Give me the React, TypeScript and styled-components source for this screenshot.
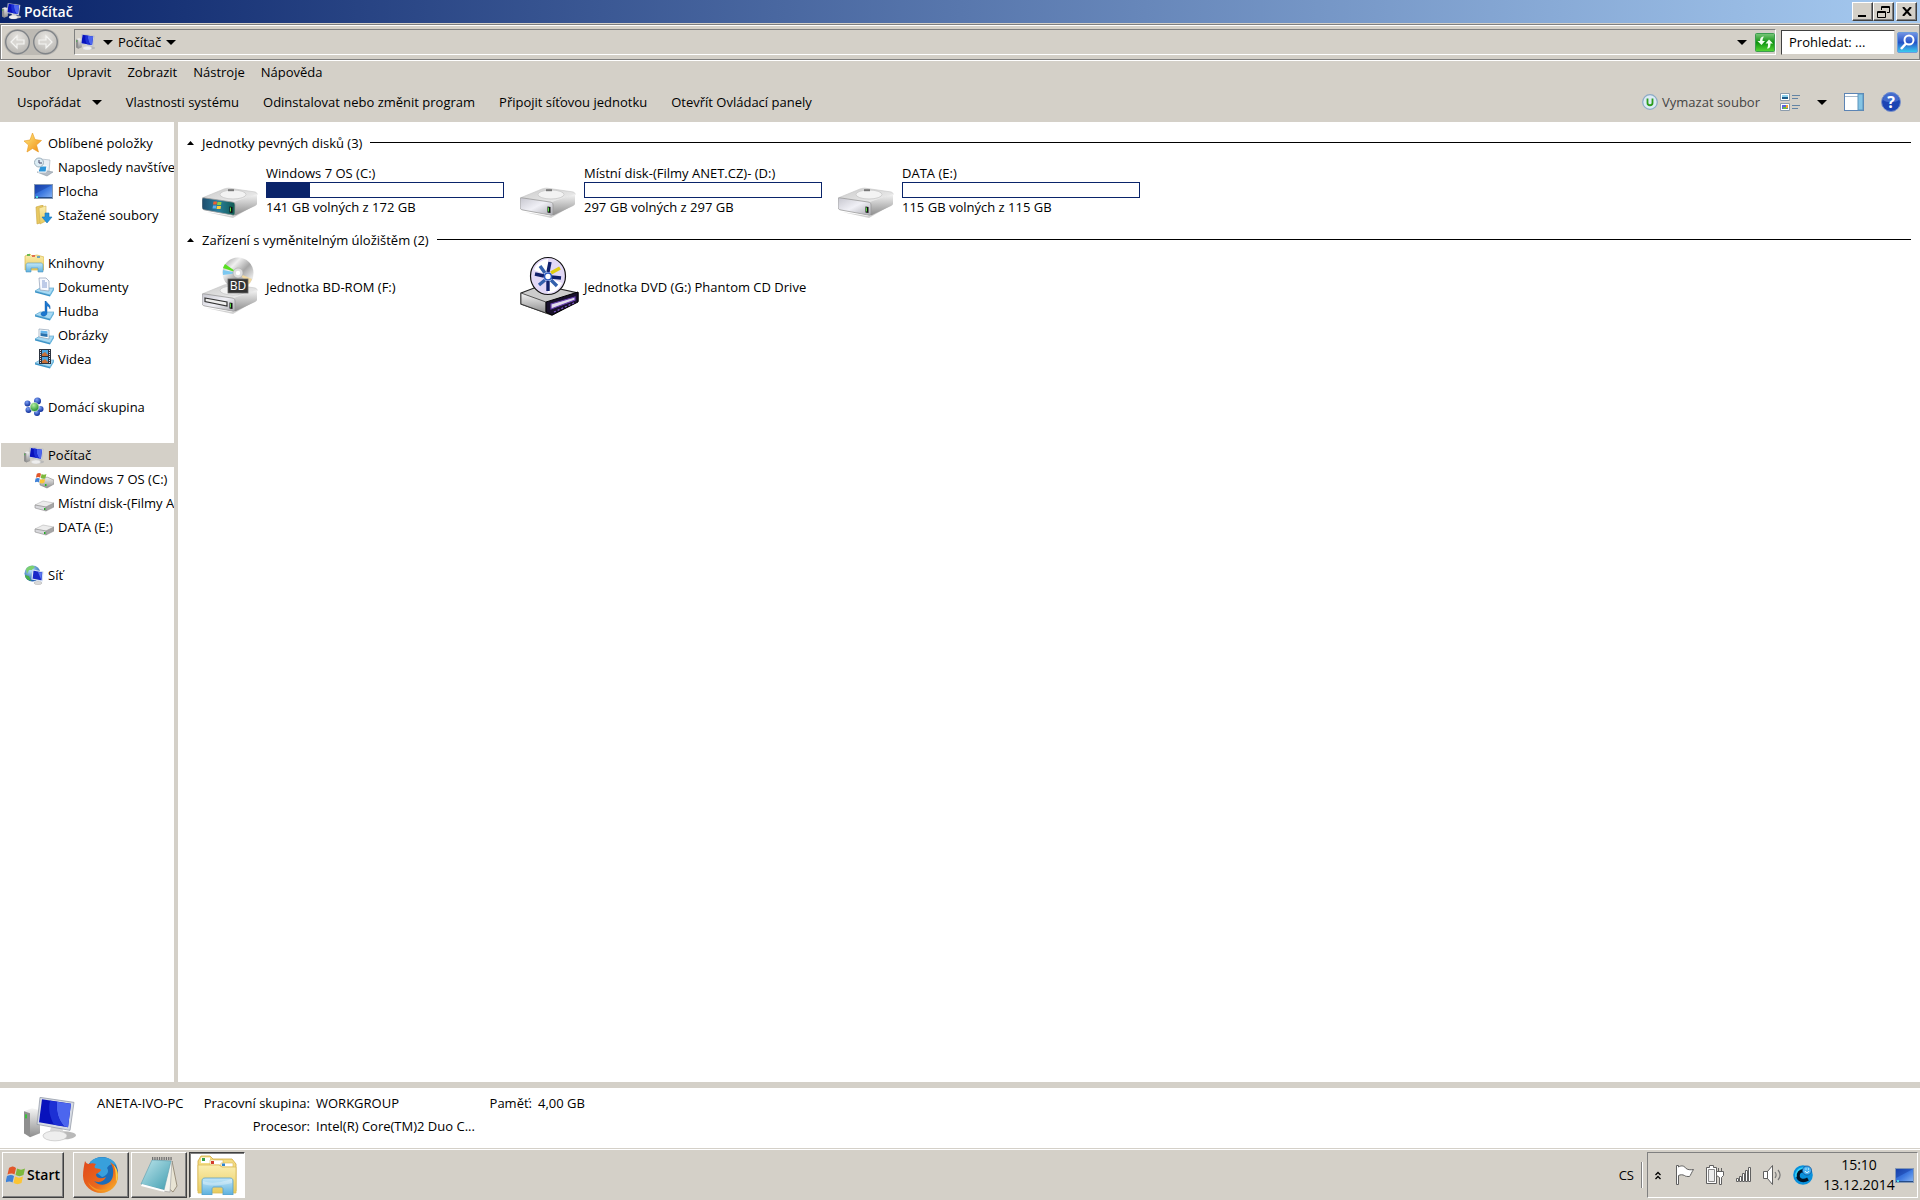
import React from 'react';
import styled, { createGlobalStyle, css } from 'styled-components';

const face = '#d4d0c8';
const navy = '#0a246a';

const GlobalStyle = createGlobalStyle`
  * { box-sizing: border-box; }
  body {
    margin: 0;
    background: ${face};
    color: #000;
    font: 13px/16px Tahoma, "Open Sans", "Noto Sans", sans-serif;
  }
  button, input { font: inherit; color: inherit; }
  button { border: 0; padding: 0; background: none; }
  h1, h2, ul, p, dl, dd { margin: 0; padding: 0; font: inherit; list-style: none; }
  a { color: inherit; text-decoration: none; }
  svg { display: block; flex: none; }
`;

const Desktop = styled.div`
  display: flex;
  flex-direction: column;
  height: 100vh;
  overflow: hidden;
  white-space: nowrap;
`;

const TitleBar = styled.header`
  display: flex;
  align-items: center;
  gap: 3px;
  height: 23px;
  padding: 0 3px 0 2px;
  background: linear-gradient(to right, ${navy}, #a6caf0);
  color: #fff;
`;

const Title = styled.h1`
  flex: 1;
  font-size: 14px;
  font-weight: 600;
`;

const WindowButtons = styled.div`
  display: flex;
`;

const CaptionButton = styled.button<{ $apart?: boolean }>`
  display: flex;
  align-items: center;
  justify-content: center;
  width: 21px;
  height: 19px;
  margin-left: ${p => (p.$apart ? 2 : 0)}px;
  background: ${face};
  border: 1px solid;
  border-color: #fff #404040 #404040 #fff;
  box-shadow: inset -1px -1px #808080;
`;

const AddressRow = styled.div`
  display: flex;
  align-items: center;
  gap: 5px;
  height: 36px;
  margin-top: 1px;
  padding: 0 1px 0 3px;
  border: 1px solid #808080;
  box-shadow: inset 1px 1px #fff, 0 1px #fff;
`;

const NavButtons = styled.div`
  display: flex;
  gap: 3px;
  padding: 0 1px;
  margin-right: 10px;
  border-radius: 14px;
  background: #bdbab4;
`;

const NavButton = styled.button`
  width: 25px;
  height: 26px;
`;

const AddressBox = styled.nav`
  display: flex;
  flex: 1;
  align-items: center;
  gap: 8px;
  height: 26px;
  padding: 0 0 0 1px;
  border: 1px solid;
  border-color: #808080 #fff #fff #808080;
`;

const Crumb = styled.button`
  display: flex;
  align-items: center;
  gap: 5px;
  margin-right: auto;
`;

const IconButton = styled.button<{ $width?: number }>`
  display: flex;
  align-items: center;
  width: ${p => (p.$width ? `${p.$width}px` : 'auto')};
`;

const SearchBox = styled.form`
  display: flex;
  align-items: center;
  gap: 2px;
`;

const SearchInput = styled.input`
  width: 114px;
  height: 25px;
  padding: 0 7px;
  background: #fff;
  border: 1px solid;
  border-color: #404040 #d4d0c8 #d4d0c8 #404040;
  border-radius: 0;
  outline: 0;
  &::placeholder { color: #000; opacity: 1; }
`;

const MenuBar = styled.nav`
  display: flex;
  align-items: center;
  gap: 16px;
  height: 24px;
  padding-left: 7px;
`;

const CommandBar = styled.div`
  display: flex;
  align-items: center;
  gap: 24px;
  height: 38px;
  padding: 0 19px 2px 17px;
`;

const Command = styled.button<{ $gap?: number; $muted?: boolean; $push?: boolean }>`
  display: flex;
  align-items: center;
  gap: ${p => p.$gap ?? 4}px;
  margin-left: ${p => (p.$push ? 'auto' : 0)};
  ${p => p.$muted && css`color: #444;`}
`;

const CommandTools = styled.div`
  display: flex;
  align-items: center;
  gap: 17px;
  margin-left: -4px;
`;

const Body = styled.div`
  display: flex;
  flex: 1;
  min-height: 0;
`;

const Sidebar = styled.nav`
  display: flex;
  flex-direction: column;
  gap: 24px;
  width: 174px;
  padding: 9px 0 0 1px;
  background: #fff;
  overflow: hidden;
`;

const TreeItem = styled.a<{ $level: number; $selected?: boolean }>`
  display: flex;
  align-items: center;
  gap: 4px;
  height: 24px;
  padding-left: ${p => (p.$level ? 33 : 23)}px;
  background: ${p => (p.$selected ? face : 'transparent')};
`;

const Content = styled.main`
  flex: 1;
  min-width: 0;
  margin-left: 4px;
  padding: 10px 9px 0 9px;
  background: #fff;
`;

const GroupHeader = styled.h2`
  display: flex;
  align-items: center;
  gap: 8px;
  height: 21px;
  &::after {
    content: '';
    flex: 1;
    height: 1px;
    background: #000;
  }
`;

const Tiles = styled.ul`
  display: grid;
  grid-template-columns: repeat(auto-fill, 302px);
  column-gap: 16px;
  height: 76px;
  padding: 5px 0 0 15px;
`;

const Tile = styled.li`
  display: flex;
  align-items: center;
  gap: 8px;
  height: 64px;
`;

const TileText = styled.div`
  display: flex;
  flex: 1;
  flex-direction: column;
  gap: 1px;
`;

const UsageBar = styled.div`
  height: 16px;
  border: 1px solid ${navy};
`;

const UsageFill = styled.div`
  height: 100%;
  background: ${navy};
`;

const Details = styled.section`
  display: flex;
  height: 60px;
  margin-top: 6px;
  padding: 7px 24px 0 24px;
  background: #fff;
`;

const DetailsIcon = styled.div`
  width: 73px;
  padding-top: 2px;
`;

const DetailGrid = styled.dl`
  display: grid;
  grid-template-columns: 108px 164px 46px auto;
  grid-auto-rows: 23px;
  column-gap: 6px;
`;

const ComputerName = styled.p`
  width: 105px;
`;

const DetailLabel = styled.dt`
  text-align: right;
`;

const DetailValue = styled.dd`
  min-width: 0;
`;

const Taskbar = styled.footer`
  display: flex;
  align-items: center;
  height: 52px;
  padding: 2px 2px 1px 2px;
  border-top: 1px solid ${face};
  box-shadow: inset 0 1px #fff;
`;

const TaskButton = styled.button<{ $active?: boolean; $start?: boolean }>`
  display: flex;
  align-items: center;
  justify-content: center;
  gap: 1px;
  width: ${p => (p.$start ? 62 : 56)}px;
  height: 46px;
  margin-right: ${p => (p.$start ? 9 : 2)}px;
  border: 1px solid;
  border-color: #fff #404040 #404040 #fff;
  box-shadow: inset -1px -1px #808080;
  ${p => p.$start && css`font-size: 14px; font-weight: 600;`}
  ${p => p.$active && css`
    background: #fff;
    border-color: #404040 #fff #fff #404040;
    box-shadow: inset 1px 1px #808080;
  `}
`;

const Language = styled.button`
  height: 26px;
  margin-left: auto;
  padding-right: 7px;
  border-right: 1px solid #808080;
  box-shadow: 1px 0 #fff;
`;

const Tray = styled.div`
  display: flex;
  align-items: center;
  gap: 10px;
  height: 46px;
  margin-left: 5px;
  padding: 0 2px 0 7px;
  border: 1px solid;
  border-color: #808080 #fff #fff #808080;
`;

const Clock = styled.time`
  width: 72px;
  margin-right: -10px;
  font-size: 14px;
  line-height: 20px;
  text-align: center;
`;

/* ---------- icons ---------- */

const SharedDefs = () => (
  <svg width="0" height="0" style={{ position: 'absolute' }} aria-hidden="true">
    <defs>
      <linearGradient id="screen" x1="0" y1="0" x2="1" y2="1">
        <stop offset="0" stopColor="#0a1cc8" /><stop offset=".45" stopColor="#0613b4" />
        <stop offset=".5" stopColor="#4a66f0" /><stop offset="1" stopColor="#1a36dc" />
      </linearGradient>
      <linearGradient id="metal" x1="0" y1="0" x2="0" y2="1">
        <stop offset="0" stopColor="#f4f4f4" /><stop offset="1" stopColor="#8e8e8e" />
      </linearGradient>
      <linearGradient id="top" x1="0" y1="0" x2="1" y2="1">
        <stop offset="0" stopColor="#cacaca" /><stop offset="1" stopColor="#f2f2f2" />
      </linearGradient>
      <linearGradient id="front" x1="0" y1="0" x2="1" y2="1">
        <stop offset="0" stopColor="#c6c6ce" /><stop offset=".5" stopColor="#f0f0f6" /><stop offset="1" stopColor="#aaaab0" />
      </linearGradient>
      <linearGradient id="osfront" x1="0" y1="0" x2="1" y2="0">
        <stop offset="0" stopColor="#1d4c6c" /><stop offset=".5" stopColor="#2a7d9c" /><stop offset="1" stopColor="#0e5a50" />
      </linearGradient>
      <linearGradient id="desk" x1="0" y1="0" x2="1" y2="1">
        <stop offset="0" stopColor="#1c48b4" /><stop offset=".5" stopColor="#3c78e0" /><stop offset="1" stopColor="#8cb8f4" />
      </linearGradient>
      <linearGradient id="folder" x1="0" y1="0" x2="0" y2="1">
        <stop offset="0" stopColor="#fbeeb0" /><stop offset="1" stopColor="#e8cb5e" />
      </linearGradient>
      <linearGradient id="glass" x1="0" y1="0" x2="0" y2="1">
        <stop offset="0" stopColor="#c4e8f8" /><stop offset="1" stopColor="#5cb0de" />
      </linearGradient>
      <linearGradient id="star" x1="0" y1="0" x2="1" y2="1">
        <stop offset="0" stopColor="#ffec80" /><stop offset="1" stopColor="#f08a10" />
      </linearGradient>
      <radialGradient id="nav" cx=".5" cy=".3" r=".7">
        <stop offset="0" stopColor="#e6e4e0" /><stop offset="1" stopColor="#b8b6b2" />
      </radialGradient>
      <radialGradient id="globe" cx=".4" cy=".3" r=".7">
        <stop offset="0" stopColor="#b8e4fa" /><stop offset="1" stopColor="#1e5cac" />
      </radialGradient>
      <radialGradient id="green" cx=".4" cy=".3" r=".7">
        <stop offset="0" stopColor="#b4f0a0" /><stop offset="1" stopColor="#1c8c28" />
      </radialGradient>
      <radialGradient id="blue" cx=".4" cy=".3" r=".7">
        <stop offset="0" stopColor="#7ca0f4" /><stop offset="1" stopColor="#0c2c98" />
      </radialGradient>
      <linearGradient id="refresh" x1="0" y1="0" x2="0" y2="1">
        <stop offset="0" stopColor="#7cc87c" /><stop offset=".5" stopColor="#0e920e" /><stop offset="1" stopColor="#58d838" />
      </linearGradient>
      <linearGradient id="search" x1="0" y1="0" x2="0" y2="1">
        <stop offset="0" stopColor="#7494e4" /><stop offset=".5" stopColor="#2454c8" /><stop offset="1" stopColor="#3cd0f0" />
      </linearGradient>
      <linearGradient id="disc" x1="0" y1="0" x2="1" y2="1">
        <stop offset="0" stopColor="#8a8a8a" /><stop offset=".3" stopColor="#f0f0f0" /><stop offset=".55" stopColor="#a6a6a6" />
        <stop offset=".8" stopColor="#e8e8e8" /><stop offset="1" stopColor="#8c8c8c" />
      </linearGradient>
      <linearGradient id="fox" x1="0" y1="0" x2="1" y2="1">
        <stop offset="0" stopColor="#e0481c" /><stop offset=".6" stopColor="#ea6a1c" /><stop offset="1" stopColor="#fcc430" />
      </linearGradient>
      <linearGradient id="pad" x1="0" y1="0" x2="1" y2="1">
        <stop offset="0" stopColor="#bfe6ec" /><stop offset="1" stopColor="#3f9db0" />
      </linearGradient>
    </defs>
  </svg>
);

const Arrow = ({ up = false }: { up?: boolean }) => (
  <svg width={up ? 7 : 10} height={up ? 4 : 5} viewBox="0 0 10 5" preserveAspectRatio="none">
    <path d={up ? 'M0 5 5 0l5 5z' : 'M0 0h10L5 5z'} fill="#000" />
  </svg>
);

const Computer = ({ size = 19 }: { size?: number }) => (
  <svg width={size} height={size * 0.86} viewBox="0 0 52 44">
    <path d="M0 14 8 11 16 13V36L6 40 0 36z" fill="url(#metal)" />
    <path d="M0 14 6 16V39L0 36z" fill="#8f8f8f" />
    <rect x="1" y="17" width="2" height="4" fill="#39c23a" />
    <ellipse cx="39" cy="38" rx="13" ry="4" fill="#b9b9b9" />
    <path d="M27 30h11l2 7c-4 3-12 3-15 0z" fill="#d9d9d9" />
    <ellipse cx="31" cy="38.500" rx="12" ry="5" fill="#eee" stroke="#bbb" strokeWidth=".6" />
    <path d="M16 0 50 5 46 33 13 27z" fill="#d6dbe4" stroke="#8d93a0" strokeWidth=".7" />
    <path d="M18 2 47 6.500 44 30 15 25z" fill="#0812bc" />
    <path d="M33 4.500 47 6.500 44 30 40 29C34 22 32 14 33 4.500z" fill="#4c66ee" />
    <path d="M26 3.500 33 4.500C32 14 34 22 40 29L30 27.500C26 20 24 12 26 3.500z" fill="#1c30d4" />
  </svg>
);

const WinFlag = ({ size = 20 }: { size?: number }) => (
  <svg width={size} height={size} viewBox="0 0 20 20">
    <path d="M3 3c3-2 5-2 7 0L8.500 9.500c-2-1.500-4-1.500-7 0z" fill="#e2572b" />
    <path d="M11 3.500c3 1.500 5 1.500 8 0L17.500 10c-3 1.500-5 1.500-8 0z" fill="#7cb83c" />
    <path d="M1 11c3-1.500 5-1.500 7 0l-1.500 6.500c-2-1.500-4-1.500-7 0z" fill="#3f82d8" />
    <path d="M9 11.500c3 1.500 5 1.500 8 0L15.500 18c-3 1.500-5 1.500-8 0z" fill="#fbc434" />
  </svg>
);

const DriveBody = ({ os = false, slot = false }: { os?: boolean; slot?: boolean }) => (
  <>
    <path d="M4 24 31 30 55 16V14L30 28z" fill="#000" opacity=".18" />
    <path d="M0 10 22 1c2-.7 4-1 6-.7l24 3.500c3 .5 3 1.500 3 3L32 15z" fill="url(#top)" stroke="#c4c4c4" strokeWidth=".6" />
    <ellipse cx="31" cy="6.500" rx="13" ry="4.500" fill="#f3f3f3" stroke="#c8c8c8" strokeWidth=".8" />
    <path d="M26 1.200h6v2h-6z" fill="#777" />
    <path d="M32 14 55 6v9c0 2-1 2.500-2 3L34 27c-1 .5-2 .5-2-1z" fill="url(#metal)" />
    <path d="M0 12c0-2 1-2.500 3-2l27 4c2 .3 3 1 3 3v8c0 2-1 2.500-3 2L3 22c-2-.4-3-1-3-3z" fill={os ? 'url(#osfront)' : 'url(#front)'} stroke="#9b9b9b" strokeWidth=".8" />
    {slot && <path d="M3 14 25 18v4L3 17.500z" fill="#eee" stroke="#333" strokeWidth="1.200" />}
    <path d="M27.500 18.500l3 .5v6l-3-.5z" fill="#111" />
    <path d="M28 19.500h1v4h-1z" fill="#54e040" />
  </>
);

const Drive = ({ os }: { os?: boolean }) => (
  <svg width="56" height="64" viewBox="0 0 56 64">
    <g transform="translate(0 30)">
      <DriveBody os={os} />
      {os && <svg x="10" y="12" width="10" height="10" viewBox="0 0 20 20">
        <path d="M3 3h7L9 9H2z" fill="#f06030" /><path d="M11 4h8l-1 6h-8z" fill="#8ccc44" />
        <path d="M2 11h7l-1 6H1z" fill="#5ab0f0" /><path d="M10 12h8l-1 6H9z" fill="#ffd040" />
      </svg>}
    </g>
  </svg>
);

const BdLabel = styled.text`
  font: 12px "Open Sans", sans-serif;
  fill: #fff;
  text-anchor: middle;
`;

const BdDrive = () => (
  <svg width="56" height="64" viewBox="0 0 56 64">
    <g transform="translate(0 29)"><DriveBody slot /></g>
    <circle cx="36" cy="18" r="15.500" fill="url(#disc)" />
    <path d="M36 18 21 13a15.500 15.500 0 0 1 2-4z" fill="#58e020" />
    <path d="M36 18 21 20a15.500 15.500 0 0 1 0-5z" fill="#7cc8f0" />
    <path d="M36 18 50 24a15.500 15.500 0 0 1-3 5z" fill="#f0d8a0" />
    <circle cx="36" cy="18" r="5" fill="#ddd" stroke="#aaa" strokeWidth=".6" />
    <circle cx="36" cy="18" r="2.200" fill="#fff" />
    <rect x="26" y="24" width="20" height="14" fill="#333" stroke="#666" strokeWidth=".8" />
    <BdLabel x="36" y="35">BD</BdLabel>
  </svg>
);

const DvdDrive = () => (
  <svg width="56" height="64" viewBox="0 0 56 64" overflow="visible">
    <path d="M1 38 22 30 58 38V46L32 60 1 49z" fill="#ccc" stroke="#222" strokeWidth="1.200" />
    <path d="M1 38 26 47V58L1 49z" fill="url(#metal)" stroke="#333" strokeWidth=".8" />
    <path d="M26 47 58 37V47L32 60 26 57z" fill="#18102c" stroke="#000" />
    <path d="M31 49 55 42V45L31 54z" fill="#e0dcea" stroke="#6840b0" strokeWidth="1.200" />
    <path d="M34 57 56 47" stroke="#8058c8" strokeWidth="1.200" strokeDasharray="2 2" />
    <ellipse cx="28" cy="21" rx="17.500" ry="18.500" fill="#e2d8f6" stroke="#111" strokeWidth="1.200" />
    <path d="M14 15A16 16 0 0 1 28 4V20zM42 28A16 16 0 0 1 28 38V22z" fill="#fff" />
    <g strokeWidth="3.400" fill="none">
      <path d="M28 17 30 7M31 22 41 23M28 26V36M24 21 15 19" stroke="#10206c" />
      <path d="M25 18 20 11M31 25 37 31M25 25 19 30" stroke="#3460ac" />
      <path d="M31 18 40 13" stroke="#e0cc10" />
    </g>
    <circle cx="28" cy="21.500" r="3.500" fill="#fff" stroke="#2858c0" strokeWidth="1.600" />
  </svg>
);

const Tray3d = () => (
  <>
    <path d="M1 14 6 11H20L16 18z" fill="#a8daf4" stroke="#4c9cc8" strokeWidth=".6" />
    <path d="M1 14 16 18V19.500L1 15.500z" fill="#3c94c8" />
    <path d="M16 18 20 11V13L16 19.500z" fill="#5cb0dc" />
  </>
);

type IconName = 'star' | 'recent' | 'desktop' | 'downloads' | 'libraries' | 'documents' | 'music'
  | 'pictures' | 'videos' | 'homegroup' | 'computer' | 'osdisk' | 'disk' | 'network';

const glyphs: Record<IconName, React.ReactNode> = {
  star: <path d="M8.500 0 11 6.500 17.500 7.500 12.500 12 14.500 19 8.500 15.500 3 19 4.500 12 0 8 6 7z" fill="url(#star)" stroke="#e89820" strokeWidth=".6" />,
  recent: (
    <>
      <path d="M7 2 16 3 15 15 7 14z" fill="#e8eef4" stroke="#a0acb8" strokeWidth=".6" />
      <path d="M3 15 8 13 19 15 13 19z" fill="#b4bcc6" stroke="#8c98a4" strokeWidth=".6" />
      <path d="M6 9 13 9 12 15 4 15z" fill="#2c94d8" stroke="#fff" />
      <circle cx="5" cy="5.500" r="4.500" fill="#dcecf4" stroke="#9cb0bc" />
      <path d="M5 3V6H8" stroke="#446" fill="none" />
    </>
  ),
  desktop: (
    <>
      <rect x=".5" y="3.500" width="18" height="14" fill="url(#desk)" stroke="#8498b4" />
      <path d="M1 4H18L1 13z" fill="#0c3098" opacity=".4" />
      <path d="M1 16.500H18" stroke="#244c88" /><rect x="2" y="15" width="2" height="2" fill="#4cd8e8" />
    </>
  ),
  downloads: (
    <>
      <path d="M2 2 9 0V17L3 19z" fill="#e8c860" stroke="#c8a440" strokeWidth=".6" />
      <path d="M5 3 12 1V16L6 19z" fill="url(#folder)" stroke="#d0b050" strokeWidth=".6" />
      <path d="M11 8H15V12H18L13 18 8 12H11z" fill="#2492dc" stroke="#1674b8" strokeWidth=".6" />
    </>
  ),
  libraries: (
    <>
      <path d="M1 3 6 1 8 3 13 2 20 4V17H1z" fill="url(#folder)" stroke="#d8b84c" strokeWidth=".7" />
      <path d="M3 2h3" stroke="#3a3" strokeWidth="1.400" /><path d="M8 3h3" stroke="#d43" strokeWidth="1.400" /><path d="M13 4h3" stroke="#38c" strokeWidth="1.400" />
      <path d="M2 12c0-1 1-2 2-2H17c1 0 2 1 2 2V19H14V15H7V19H2z" fill="url(#glass)" stroke="#5098c4" strokeWidth=".6" />
    </>
  ),
  documents: <><Tray3d /><path d="M5 1H12L15 4V14L6 13z" fill="#f8faff" stroke="#8c9cb4" strokeWidth=".7" /><path d="M8 4H11M8 6H13M8 8H13M8 10H13" stroke="#6484c4" strokeWidth=".8" /></>,
  music: <><Tray3d /><path d="M12 0c1 3 5 3 4 8-.5-2-2-3-3-3V12c0 4-6 4-6 1 0-2 3-3 4-2V0z" fill="#1c78d0" stroke="#0c54a4" strokeWidth=".4" /></>,
  pictures: <><Tray3d /><path d="M5 4 15 5V14L5 12z" fill="#fff" stroke="#8ca0b4" strokeWidth=".7" /><path d="M6.500 5.500 13.500 6.200V9L6.500 8z" fill="#64b4ec" /><path d="M6.500 8 13.500 9V12L6.500 11z" fill="#2870ac" /></>,
  videos: <><Tray3d /><rect x="5" y="0" width="12" height="15" fill="#2c3440" /><path d="M8 1H14V7H8zM8 8H14V14H8z" fill="#4ca4e0" /><path d="M8 5l3-2 3 3v1H8zM8 12l3-2 3 3v1H8z" fill="#c87038" /><path d="M6.500 1V15M15.500 1V15" stroke="#dde" strokeDasharray="1 1" /></>,
  homegroup: (
    <>
      <circle cx="3.500" cy="6.500" r="3" fill="url(#blue)" /><circle cx="4.500" cy="13" r="3" fill="url(#blue)" />
      <circle cx="13.500" cy="4" r="3.500" fill="url(#blue)" /><circle cx="16.500" cy="12" r="3" fill="url(#blue)" />
      <circle cx="13" cy="16" r="3" fill="url(#blue)" /><circle cx="10.500" cy="10" r="4.500" fill="url(#green)" stroke="#fff" strokeWidth=".6" />
    </>
  ),
  computer: <svg y="2" width="20" height="17" viewBox="0 0 52 44"><Computer size={52} /></svg>,
  osdisk: <><path d="M6 12 13 8 20 11V15L13 19 6 16z" fill="url(#metal)" stroke="#888" strokeWidth=".6" /><rect x="11" y="15" width="1.500" height="2" fill="#2b2" /><svg x="1" y="3" width="12" height="12" viewBox="0 0 20 20"><WinFlag /></svg></>,
  disk: <><path d="M1 12 9 8 20 10 12 14z" fill="#ececec" stroke="#aaa" strokeWidth=".5" /><path d="M1 12 12 14V18L1 15z" fill="#d8d8dc" stroke="#888" strokeWidth=".6" /><path d="M12 14 20 10V14L12 18z" fill="#a6a6a6" stroke="#888" strokeWidth=".5" /><rect x="10" y="15" width="1.500" height="2" fill="#2a2" /></>,
  network: (
    <>
      <circle cx="8.500" cy="8.500" r="8" fill="url(#globe)" />
      <path d="M2 4c3-4 7-4 9-2L8 5H5L3 9z" fill="#7cd070" /><path d="M1 10 5 11 7 16C3 15 1 13 1 10z" fill="#48b048" />
      <path d="M9 5 19 7 18 16 8 14z" fill="#1828c8" stroke="#d8e4f4" strokeWidth="1.200" />
      <path d="M14 7 18 7.600 17.300 15z" fill="#5c78f0" />
      <ellipse cx="14" cy="18" rx="4" ry="1.500" fill="#ddd" stroke="#999" strokeWidth=".4" />
    </>
  ),
};

const SmallIcon = ({ name }: { name: IconName }) => (
  <svg width="20" height="20" viewBox="0 0 20 20" aria-hidden="true">{glyphs[name]}</svg>
);

const NavArrow = ({ flip = false }: { flip?: boolean }) => (
  <svg width="25" height="26" viewBox="0 0 25 26">
    <circle cx="12.500" cy="13" r="11.800" fill="url(#nav)" stroke="#808488" strokeWidth="1.400" />
    <path transform={flip ? 'rotate(180 12.500 13)' : undefined} d="M6 13 12 7V11H19V15H12V19z" fill="#d8d6d2" stroke="#f4f4f2" strokeWidth="1.200" />
  </svg>
);

const RefreshIcon = () => (
  <svg width="20" height="19" viewBox="0 0 20 19">
    <rect x=".5" y=".5" width="19" height="18" rx="1" fill="url(#refresh)" stroke="#3c9c50" />
    <path d="M9 3.500C6 3.500 5 5 5 8H2.500L6.500 12 10 8H7.500C7.500 6 8 5 9 3.500zM12 15.500c3 0 3.500-2 3.500-5H18L14 6.500 10.500 10.500H13c0 2 0 3.500-1 5z" fill="#f4fff0" />
  </svg>
);

const SearchIcon = () => (
  <svg width="21" height="21" viewBox="0 0 21 21">
    <rect x=".5" y=".5" width="20" height="20" rx="1.500" fill="url(#search)" stroke="#6c9cdc" />
    <circle cx="12" cy="8" r="4.500" fill="none" stroke="#fff" strokeWidth="2" />
    <path d="M9 11.500 4 17" stroke="#fff" strokeWidth="2.600" />
  </svg>
);

const UIcon = () => (
  <svg width="16" height="16" viewBox="0 0 16 16">
    <circle cx="8" cy="8" r="7.300" fill="#dcebf5" stroke="#8caac6" strokeWidth="1.200" />
    <path d="M5.500 4.500V9c0 3 5 3 5 0V4.500" fill="none" stroke="#2c9c1c" strokeWidth="1.800" />
  </svg>
);

const ViewIcon = () => (
  <svg width="20" height="20" viewBox="0 0 20 20">
    <path d="M.5 1.500h9v7h-9zM.5 11.500h9v7h-9z" fill="#fff" stroke="#8c9cac" />
    <path d="M2 3h6v4H2z" fill="#8cd0ec" /><path d="M2 5h6v2H2z" fill="#1c5c8c" />
    <path d="M2 13h6v4H2z" fill="#5c64dc" /><path d="M3 15h4v2H3z" fill="#68c040" /><path d="M6 13h2v3H6z" fill="#f0a030" />
    <path d="M12 3.500h8M12 6.500h6M12 13.500h8M12 16.500h6" stroke="#6484a4" />
  </svg>
);

const PaneIcon = () => (
  <svg width="20" height="18" viewBox="0 0 20 18">
    <rect x=".5" y=".5" width="19" height="17" fill="#fff" stroke="#5c84b4" />
    <path d="M1 3.500H19" stroke="#a4b8cc" /><path d="M14 1H19V17H14z" fill="#84c4e4" stroke="#5c94bc" />
  </svg>
);

const HelpMark = styled.text`
  font: bold 16px "Open Sans", sans-serif;
  fill: #fff;
  text-anchor: middle;
`;

const HelpIcon = () => (
  <svg width="20" height="20" viewBox="0 0 20 20">
    <circle cx="10" cy="10" r="9.500" fill="#1c44b4" stroke="#7c94cc" />
    <path d="M2 8a8 8 0 0 1 16 0c-4 3-12 3-16 0z" fill="#5c84dc" opacity=".6" />
    <HelpMark x="10" y="16">?</HelpMark>
  </svg>
);

const FirefoxIcon = () => (
  <svg width="38" height="38" viewBox="0 0 38 38">
    <circle cx="20" cy="17" r="16" fill="#1c6cb8" />
    <path d="M8 6C14-1 30-1 35 10c-4-3-8-2-10 2 3 4-1 8-5 9L10 13z" fill="#38a0dc" />
    <path d="M3 5c1 2 2 3 4 3 2-1 5-1 7 0-1 1-2 3-1 4 2 1 5 0 6 2-1 3-5 3-5 5 1 4 6 4 10 2-2 5-8 6-12 4 5 6 18 5 19-6 1-6-1-10-3-13 5 3 8 8 8 14 0 10-8 17-17 17S1 30 1 20c0-6 1-10 2-15z" fill="url(#fox)" />
    <path d="M31 8c5 5 6 12 3 18 0-5 0-13-3-18z" fill="#fcd040" />
    <path d="M6 26c6 9 17 10 25 4-6 8-20 8-25-4z" fill="#f49824" />
  </svg>
);

const NotepadIcon = () => (
  <svg width="38" height="38" viewBox="0 0 38 38">
    <path d="M32 5 37 30 33 36 26 30z" fill="#e8e4d4" stroke="#887c68" strokeWidth=".8" />
    <path d="M14 4 32 5 30 36 22 35z" fill="#f4f4ee" stroke="#999" strokeWidth=".6" />
    <path d="M12 4 31 5 24 34 1 28z" fill="url(#pad)" stroke="#5c9cac" strokeWidth=".6" />
    <path d="M12 2.500H32" stroke="#707070" strokeWidth="3" strokeDasharray="1.300 1" />
    <path d="M2 28 24 34 24.500 36 1 30z" fill="#fff" />
  </svg>
);

const ExplorerIcon = () => (
  <svg width="42" height="40" viewBox="0 0 42 40">
    <path d="M2 6 5 1H14L17 4H36L40 9V36H2z" fill="#f4dc84" stroke="#d0a83c" strokeWidth=".8" />
    <path d="M5 2.500H14V8H5z" fill="#fff" /><path d="M6 3H9V6H6z" fill="#34a048" />
    <path d="M14 5H27V10H14z" fill="#fff" stroke="#d8b850" strokeWidth=".6" /><path d="M15 6H18V9H15z" fill="#d43c2c" />
    <path d="M25 8H37V12H25z" fill="#fff" stroke="#d8b850" strokeWidth=".6" /><path d="M26 8.500H29V11H26z" fill="#2c84d0" />
    <path d="M2 10H23L26 12H40V38H2z" fill="url(#folder)" stroke="#dcbc58" strokeWidth=".8" />
    <path d="M6 26c0-2 1-3 3-3H34c2 0 3 1 3 3V40H27V34c0-1-1-2-2-2H18c-1 0-2 1-2 2V40H6z" fill="url(#glass)" stroke="#58a0c8" strokeWidth=".8" />
    <path d="M7 26c10 4 22 0 29-2v4c-8 2-20 4-29 1z" fill="#fff" opacity=".3" />
  </svg>
);

const trayStroke = { fill: '#fff', stroke: '#606060', strokeWidth: 1 };

const Chevrons = () => (
  <svg width="6" height="9" viewBox="0 0 6 9"><path d="M.5 4 3 1.500 5.500 4M.5 8 3 5.500 5.500 8" fill="none" stroke="#000" strokeWidth="1.300" /></svg>
);
const FlagIcon = () => (
  <svg width="20" height="20" viewBox="0 0 20 20"><path d="M1.500.5h2v1.500c3-2 6-1 7 1 2 2 5 2 8 1.500-2 3-3 6-4 7-2 0-4 0-5-1-2-1-4-1-6 0v9h-2z" {...trayStroke} /></svg>
);
const PowerIcon = () => (
  <svg width="20" height="20" viewBox="0 0 20 20">
    <path d="M4.500.5h4v2h3v16h-10v-16h3z" {...trayStroke} /><path d="M3.500 4.500h6v12h-6z" fill="#eee" stroke="#888" />
    <path d="M13.500 3v3M16.500 3v3M11.500 6.500h7v4l-2 2v7h-2v-7l-3-2z" {...trayStroke} />
  </svg>
);
const SignalIcon = () => (
  <svg width="18" height="18" viewBox="0 0 18 18"><path d="M1.500 12.500h2v3h-2zM4.500 10.500h2v5h-2zM7.500 7.500h2v8h-2zM10.500 4.500h2v11h-2zM13.500 1.500h2v14h-2z" {...trayStroke} /></svg>
);
const SpeakerIcon = () => (
  <svg width="20" height="20" viewBox="0 0 20 20">
    <path d="M.5 6.500h4l5-6v19l-5-6h-4z" {...trayStroke} /><path d="M4.500 6v8" stroke="#606060" />
    <path d="M12 7c1.500 2 1.500 4 0 6M15 5c2.500 3 2.500 7 0 10" fill="none" stroke="#777" strokeWidth="1.200" />
  </svg>
);
const CometIcon = () => (
  <svg width="20" height="20" viewBox="0 0 20 20">
    <circle cx="10" cy="10" r="9.800" fill="#0890dc" />
    <path d="M14 7C8 4 5 7 5 11s5 6 10 3" fill="none" stroke="#001428" strokeWidth="3.400" />
    <path d="M11 3C5 3 2 8 3 12" fill="none" stroke="#30d0f8" strokeWidth="1.600" />
    <circle cx="14" cy="5.500" r="4.500" fill="#48b4f4" stroke="#0c4c94" strokeWidth=".8" />
    <path d="M12 6c1 2 3 2 4 0M12.500 4h1M15 4h1" stroke="#fff" fill="none" />
  </svg>
);

/* ---------- data ---------- */

type Node = { label: string; icon: IconName; children?: Node[]; selected?: boolean };

const tree: Node[] = [
  { label: 'Oblíbené položky', icon: 'star', children: [
    { label: 'Naposledy navštívené', icon: 'recent' },
    { label: 'Plocha', icon: 'desktop' },
    { label: 'Stažené soubory', icon: 'downloads' },
  ] },
  { label: 'Knihovny', icon: 'libraries', children: [
    { label: 'Dokumenty', icon: 'documents' },
    { label: 'Hudba', icon: 'music' },
    { label: 'Obrázky', icon: 'pictures' },
    { label: 'Videa', icon: 'videos' },
  ] },
  { label: 'Domácí skupina', icon: 'homegroup' },
  { label: 'Počítač', icon: 'computer', selected: true, children: [
    { label: 'Windows 7 OS (C:)', icon: 'osdisk' },
    { label: 'Místní disk-(Filmy ANET.CZ)- (D:)', icon: 'disk' },
    { label: 'DATA (E:)', icon: 'disk' },
  ] },
  { label: 'Síť', icon: 'network' },
];

const disks = [
  { name: 'Windows 7 OS (C:)', free: 141, total: 172, os: true },
  { name: 'Místní disk-(Filmy ANET.CZ)- (D:)', free: 297, total: 297 },
  { name: 'DATA (E:)', free: 115, total: 115 },
];

const menus = ['Soubor', 'Upravit', 'Zobrazit', 'Nástroje', 'Nápověda'];
const commands = ['Vlastnosti systému', 'Odinstalovat nebo změnit program', 'Připojit síťovou jednotku', 'Otevřít Ovládací panely'];

export default function App() {
  return (
    <Desktop>
      <GlobalStyle />
      <SharedDefs />
      <TitleBar>
        <Computer size={19} />
        <Title>Počítač</Title>
        <WindowButtons>
          <CaptionButton aria-label="Minimalizovat"><svg width="11" height="11"><path d="M1 9h8v2H1z" /></svg></CaptionButton>
          <CaptionButton aria-label="Obnovit">
            <svg width="13" height="12" fill="none" stroke="#000"><path d="M4.500 4V.5h8v6H10M4 1.500h9M.5 5.500h8v6h-8zM0 6.500h9" /></svg>
          </CaptionButton>
          <CaptionButton $apart aria-label="Zavřít"><svg width="10" height="9"><path d="M1 0 9 9M9 0 1 9" stroke="#000" strokeWidth="2" /></svg></CaptionButton>
        </WindowButtons>
      </TitleBar>

      <AddressRow>
        <NavButtons>
          <NavButton aria-label="Zpět"><NavArrow /></NavButton>
          <NavButton aria-label="Vpřed"><NavArrow flip /></NavButton>
        </NavButtons>
        <AddressBox>
          <Computer size={19} />
          <Crumb><Arrow />Počítač<Arrow /></Crumb>
          <IconButton aria-label="Předchozí umístění"><Arrow /></IconButton>
          <IconButton aria-label="Aktualizovat"><RefreshIcon /></IconButton>
        </AddressBox>
        <SearchBox>
          <SearchInput aria-label="Prohledat" placeholder="Prohledat: ..." />
          <IconButton type="button" aria-label="Hledat"><SearchIcon /></IconButton>
        </SearchBox>
      </AddressRow>

      <MenuBar>{menus.map(m => <button key={m}>{m}</button>)}</MenuBar>

      <CommandBar>
        <Command $gap={11}>Uspořádat<Arrow /></Command>
        {commands.map(c => <Command key={c}>{c}</Command>)}
        <Command $push $muted><UIcon />Vymazat soubor</Command>
        <CommandTools>
          <IconButton aria-label="Zobrazení"><ViewIcon /></IconButton>
          <IconButton aria-label="Další možnosti"><Arrow /></IconButton>
          <IconButton aria-label="Podokno náhledu"><PaneIcon /></IconButton>
          <IconButton aria-label="Nápověda"><HelpIcon /></IconButton>
        </CommandTools>
      </CommandBar>

      <Body>
        <Sidebar>
          {tree.map(group => (
            <div key={group.label}>
              <TreeItem href="#" $level={0} $selected={group.selected}><SmallIcon name={group.icon} />{group.label}</TreeItem>
              {group.children?.map(n => (
                <TreeItem href="#" key={n.label} $level={1}><SmallIcon name={n.icon} />{n.label}</TreeItem>
              ))}
            </div>
          ))}
        </Sidebar>
        <Content>
          <GroupHeader><Arrow up />Jednotky pevných disků (3)</GroupHeader>
          <Tiles>
            {disks.map(d => (
              <Tile key={d.name}>
                <Drive os={d.os} />
                <TileText>
                  <span>{d.name}</span>
                  <UsageBar><UsageFill style={{ width: `${(1 - d.free / d.total) * 100}%` }} /></UsageBar>
                  <span>{d.free} GB volných z {d.total} GB</span>
                </TileText>
              </Tile>
            ))}
          </Tiles>
          <GroupHeader><Arrow up />Zařízení s vyměnitelným úložištěm (2)</GroupHeader>
          <Tiles>
            <Tile><BdDrive /><span>Jednotka BD-ROM (F:)</span></Tile>
            <Tile><DvdDrive /><span>Jednotka DVD (G:) Phantom CD Drive</span></Tile>
          </Tiles>
        </Content>
      </Body>

      <Details>
        <DetailsIcon><Computer size={52} /></DetailsIcon>
        <ComputerName>ANETA-IVO-PC</ComputerName>
        <DetailGrid>
          <DetailLabel>Pracovní skupina:</DetailLabel><DetailValue>WORKGROUP</DetailValue>
          <DetailLabel>Paměť:</DetailLabel><DetailValue>4,00 GB</DetailValue>
          <DetailLabel>Procesor:</DetailLabel><DetailValue>Intel(R) Core(TM)2 Duo C...</DetailValue>
        </DetailGrid>
      </Details>

      <Taskbar>
        <TaskButton $start><WinFlag size={20} />Start</TaskButton>
        <TaskButton aria-label="Firefox"><FirefoxIcon /></TaskButton>
        <TaskButton aria-label="Poznámkový blok"><NotepadIcon /></TaskButton>
        <TaskButton $active aria-label="Průzkumník"><ExplorerIcon /></TaskButton>
        <Language>CS</Language>
        <Tray>
          <IconButton $width={10} aria-label="Skryté ikony"><Chevrons /></IconButton>
          <FlagIcon /><PowerIcon /><SignalIcon /><SpeakerIcon /><CometIcon />
          <Clock>15:10<br />13.12.2014</Clock>
          <IconButton aria-label="Zobrazit plochu"><SmallIcon name="desktop" /></IconButton>
        </Tray>
      </Taskbar>
    </Desktop>
  );
}
